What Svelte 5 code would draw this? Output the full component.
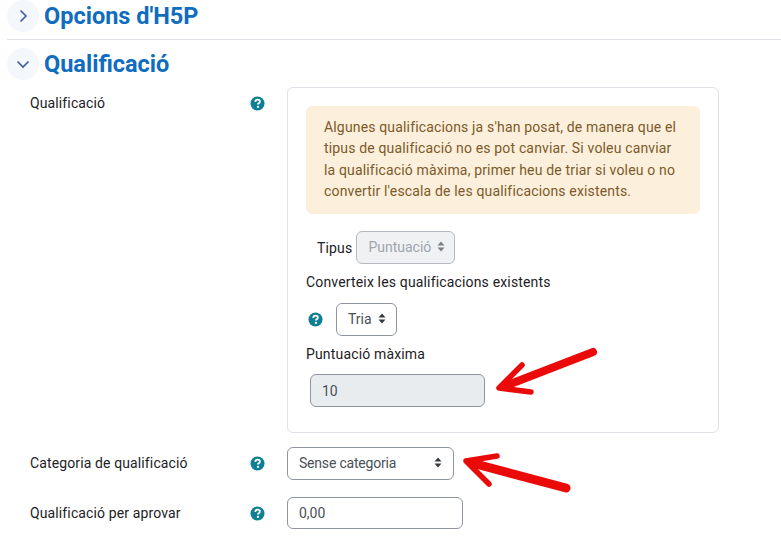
<script>
    const alertText = [
        "Algunes qualificacions ja s'han posat, de manera que el",
        "tipus de qualificació no es pot canviar. Si voleu canviar",
        "la qualificació màxima, primer heu de triar si voleu o no",
        "convertir l'escala de les qualificacions existents.",
    ];
</script>

{#snippet help()}
    <svg class="help" viewBox="0 0 16 16" width="15" height="15" aria-hidden="true">
        <circle cx="8" cy="8" r="7.5" fill="#0f7f94" />
        <path d="M5.6 6.2c.1-1.4 1.1-2.3 2.5-2.3 1.4 0 2.4.8 2.4 2 0 1-.6 1.5-1.2 1.9-.6.3-.8.6-.8 1.2" fill="none" stroke="#fff" stroke-width="2" />
        <rect x="7.4" y="10.5" width="2.1" height="2.1" fill="#fff" />
    </svg>
{/snippet}

{#snippet updown()}
    <svg class="updown" viewBox="0 0 8 11" width="8" height="11" aria-hidden="true">
        <path d="M4 0.5 7.5 4.5H.5ZM4 10.5 .5 6.5H7.5Z" fill="currentColor" />
    </svg>
{/snippet}

<div class="page">
    <section class="head first">
        <span class="toggle">
            <svg viewBox="0 0 14 14" width="14" height="14"><path d="M4.5 1.5 10 7 4.5 12.5" fill="none" stroke="#3b5ba5" stroke-width="1.6" /></svg>
        </span>
        <h3>Opcions d'H5P</h3>
    </section>
    <div class="rule"></div>
    <section class="head">
        <span class="toggle">
            <svg viewBox="0 0 14 14" width="14" height="14"><path d="M1.5 4.5 7 10 12.5 4.5" fill="none" stroke="#3b5ba5" stroke-width="1.6" /></svg>
        </span>
        <h3>Qualificació</h3>
    </section>

    <div class="row top">
        <div class="label">Qualificació</div>
        <div class="help-col">{@render help()}</div>
        <div class="box">
            <div class="alert">
                {#each alertText as line}
                    <div>{line}</div>
                {/each}
            </div>
            <div class="tipus">
                <span>Tipus</span>
                <span class="select disabled">Puntuació {@render updown()}</span>
            </div>
            <div class="plain convert">Converteix les qualificacions existents</div>
            <div class="tria">
                {@render help()}
                <span class="select">Tria {@render updown()}</span>
            </div>
            <div class="plain max">Puntuació màxima</div>
            <div class="input readonly">10</div>
        </div>
    </div>

    <div class="row cat">
        <div class="label">Categoria de qualificació</div>
        <div class="help-col">{@render help()}</div>
        <span class="select wide">Sense categoria {@render updown()}</span>
    </div>

    <div class="row pass">
        <div class="label">Qualificació per aprovar</div>
        <div class="help-col">{@render help()}</div>
        <div class="input grade">0,00</div>
    </div>

    <div class="rule bottom"></div>

    <svg class="arrow" viewBox="0 0 781 547" width="781" height="547" aria-hidden="true">
        <g fill="none" stroke="#ea0a0a" stroke-linecap="round" stroke-linejoin="round">
            <path d="M593 352 505 386" stroke-width="8" />
            <path d="M522 365 499 388 531 392" stroke-width="5.5" />
            <path d="M566 488 472 463" stroke-width="9" />
            <path d="M497 456 466 461 489 484" stroke-width="5.5" />
        </g>
    </svg>
</div>

<style>
    :global(body) {
        margin: 0;
        background: #fff;
    }

    .page {
        position: relative;
        width: 781px;
        height: 547px;
        overflow: hidden;
        font-family: Roboto, "Liberation Sans", sans-serif;
        font-size: 14px;
        letter-spacing: 0.16px;
        color: #1d2125;
    }

    .head {
        display: flex;
        align-items: center;
        gap: 5px;
        height: 32px;
        margin-left: 7px;
    }

    .toggle {
        display: flex;
        align-items: center;
        justify-content: center;
        width: 32px;
        height: 32px;
        border-radius: 50%;
        background: #f4f8fc;
    }

    h3 {
        margin: 0;
        font-size: 23.5px;
        font-weight: 700;
        letter-spacing: 0;
        color: #0f6cbf;
    }

    .rule {
        height: 1px;
        background: #dee2e6;
        margin: 7px 0 8px 7px;
    }

    .rule.bottom {
        margin-top: 18px;
    }

    .row {
        display: flex;
        align-items: center;
        margin-left: 30px;
    }

    .row.top {
        align-items: flex-start;
        margin-top: 7px;
    }

    .row.cat {
        margin-top: 14px;
    }

    .row.pass {
        margin-top: 17px;
    }

    .label {
        width: 220px;
        flex: none;
        letter-spacing: 0.12px;
    }

    .row.top .label {
        line-height: 16px;
        padding-top: 8px;
    }

    .row.cat .label {
        padding-bottom: 2px;
    }

    .help-col {
        width: 37px;
        flex: none;
        display: flex;
    }

    .row.top .help-col {
        padding-top: 9px;
    }

    .help {
        display: block;
        flex: none;
    }

    .box {
        box-sizing: border-box;
        width: 432px;
        height: 346px;
        padding: 18px 18px 0;
        border: 1px solid #dee2e6;
        border-radius: 6px;
    }

    .alert {
        box-sizing: border-box;
        width: 394px;
        height: 108px;
        padding: 11px 18px;
        border-radius: 6px;
        background: #fcefdc;
        color: #7d5a29;
        line-height: 21.3px;
    }

    .select {
        box-sizing: border-box;
        display: inline-flex;
        align-items: center;
        justify-content: space-between;
        height: 33px;
        padding: 0 11px 2px;
        border: 1px solid #8f959e;
        border-radius: 6px;
        background: #fff;
        color: #495057;
        letter-spacing: 0;
    }

    .select.disabled {
        width: 99px;
        background: #eff1f3;
        border-color: #b5bac1;
        color: #a1a6ac;
    }

    .select.wide {
        width: 167px;
        letter-spacing: -0.2px;
    }

    .updown {
        flex: none;
        margin-left: 6px;
        color: #343a40;
    }

    .disabled .updown {
        color: #7b8087;
    }

    .tipus {
        display: flex;
        align-items: center;
        gap: 4px;
        margin: 17px 0 0 11px;
    }

    .plain {
        line-height: 16px;
    }

    .convert {
        margin: 10px 0 0;
    }

    .tria {
        display: flex;
        align-items: center;
        gap: 13px;
        margin: 13px 0 0 2px;
    }

    .tria .select {
        width: 61px;
    }

    .max {
        margin-top: 10px;
    }

    .input {
        box-sizing: border-box;
        display: flex;
        align-items: center;
        height: 32px;
        padding: 0 11px;
        border: 1px solid #8f959e;
        border-radius: 6px;
        color: #495057;
        letter-spacing: 0;
    }

    .input.readonly {
        width: 175px;
        height: 33px;
        margin: 12px 0 0 4px;
        background: #e9ecef;
    }

    .input.grade {
        width: 176px;
    }

    .arrow {
        position: absolute;
        left: 0;
        top: 0;
        pointer-events: none;
    }
</style>
